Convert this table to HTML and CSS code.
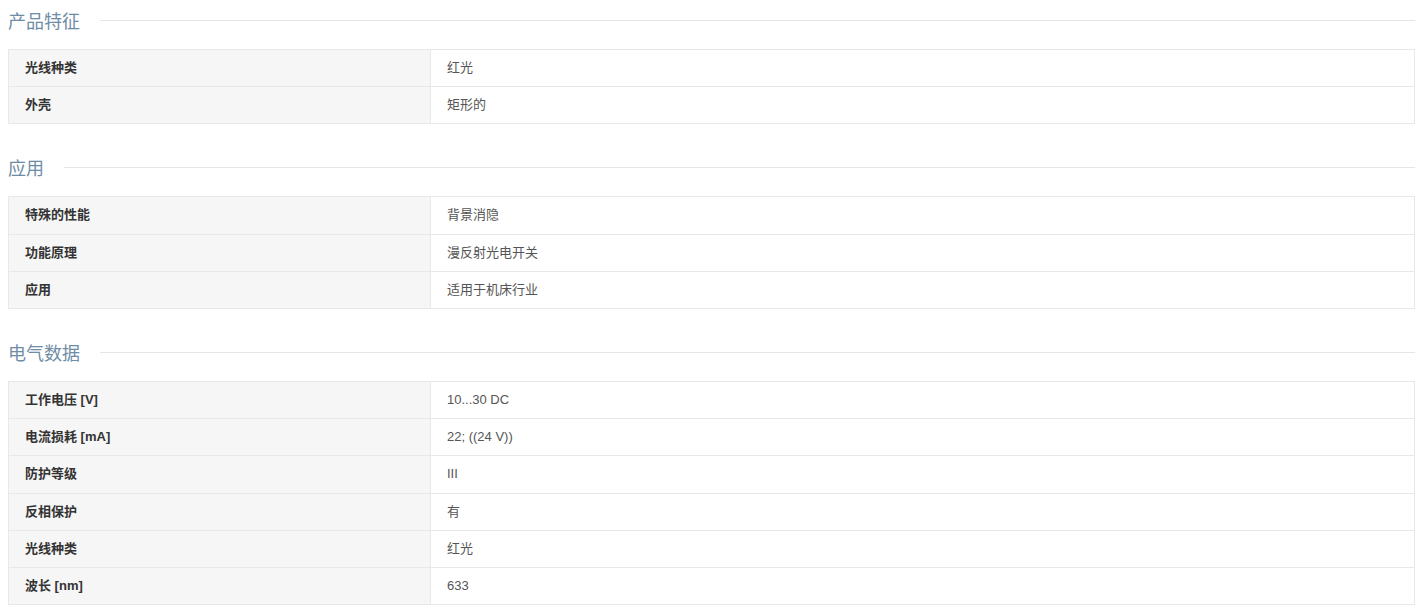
FILE: index.html
```html
<!DOCTYPE html>
<html>
<head>
  <meta charset="utf-8">
  <title>技术参数</title>
  <link rel="stylesheet" href="styles.css">
</head>
<body>
  <div class="spec">
    <h3 class="spec-title"><span>产品特征</span></h3>
    <table class="spec-table">
      <tr><th>光线种类</th><td>红光</td></tr>
      <tr><th>外壳</th><td>矩形的</td></tr>
    </table>

    <h3 class="spec-title"><span>应用</span></h3>
    <table class="spec-table">
      <tr><th>特殊的性能</th><td>背景消隐</td></tr>
      <tr><th>功能原理</th><td>漫反射光电开关</td></tr>
      <tr><th>应用</th><td>适用于机床行业</td></tr>
    </table>

    <h3 class="spec-title"><span>电气数据</span></h3>
    <table class="spec-table">
      <tr><th>工作电压 [V]</th><td>10...30 DC</td></tr>
      <tr><th>电流损耗 [mA]</th><td>22; ((24 V))</td></tr>
      <tr><th>防护等级</th><td>III</td></tr>
      <tr><th>反相保护</th><td>有</td></tr>
      <tr><th>光线种类</th><td>红光</td></tr>
      <tr><th>波长 [nm]</th><td>633</td></tr>
    </table>
  </div>
</body>
</html>
```

FILE: styles.css
```css
body {
  margin: 8px;
  font-family: "Liberation Sans", Arial, "Noto Sans CJK SC", sans-serif;
  font-size: 13px;
  color: #555;
  background: #fff;
}

.spec-title {
  display: flex;
  align-items: center;
  margin: 0 0 17px 0;
  height: 24px;
  font-size: 18px;
  font-weight: normal;
  color: #6f8ca6;
}

.spec-title::after {
  content: "";
  flex: 1;
  height: 1px;
  margin-left: 20px;
  background: #e5e5e5;
}

.spec-table + .spec-title {
  margin-top: 31px;
}

.spec-table {
  width: 100%;
  border-collapse: collapse;
  border: 1px solid #e8e8e8;
}

.spec-table th,
.spec-table td {
  border: 1px solid #e8e8e8;
  padding: 9px 16px;
  line-height: 18.2px;
  text-align: left;
  vertical-align: middle;
}

.spec-table th {
  width: 389px;
  padding-left: 16px;
  background: #f6f6f6;
  font-weight: bold;
  color: #333;
}

.spec-table td {
  color: #555;
}
```
